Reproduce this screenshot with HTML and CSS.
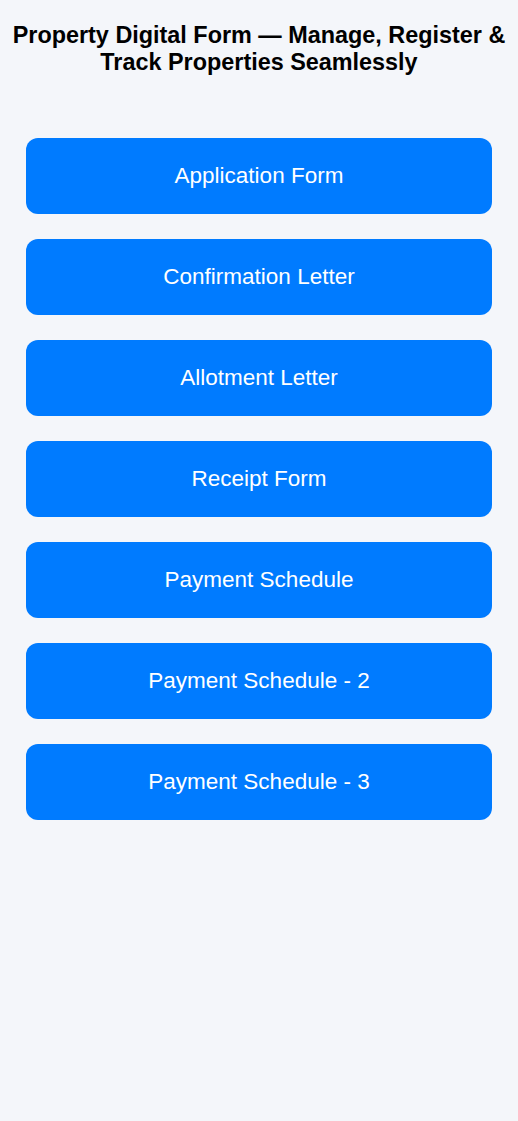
FILE: index.html
```html
<!DOCTYPE html>
<html lang="en">
<head>
  <meta charset="UTF-8" />
  <meta name="viewport" content="width=device-width, initial-scale=1" />
  <title>Property Digital Form</title>
  <link rel="stylesheet" href="styles.css">
</head>
<body>
  <div class="container">
    <h1>Property Digital Form — Manage, Register &amp; Track Properties Seamlessly</h1>

    <div class="menu">
      <a class="menu-btn" href="#">Application Form</a>
      <a class="menu-btn" href="#">Confirmation Letter</a>
      <a class="menu-btn" href="#">Allotment Letter</a>
      <a class="menu-btn" href="#">Receipt Form</a>
      <a class="menu-btn" href="#">Payment Schedule</a>
      <a class="menu-btn" href="#">Payment Schedule - 2</a>
      <a class="menu-btn" href="#">Payment Schedule - 3</a>
    </div>
  </div>
</body>
</html>
```

FILE: styles.css
```css
*, *::before, *::after {
  box-sizing: border-box;
}

body {
  margin: 0;
  font-family: Arial, "Liberation Sans", Helvetica, sans-serif;
  background: #f4f6fa;
  color: #000;
  min-height: 100vh;
}

.container {
  padding: 22px 26px;
}

h1 {
  font-size: 23.4px;
  font-weight: 700;
  text-align: center;
  margin: 0 -20px;
}

/* Botões do menu */
.menu {
  display: flex;
  flex-direction: column;
  gap: 25px;
  margin-top: 62px;
}

.menu-btn {
  display: flex;
  align-items: center;
  justify-content: center;
  height: 76px;
  background: #007bff;
  color: #fff;
  border-radius: 12px;
  font-size: 22.5px;
  text-decoration: none;
}
```
